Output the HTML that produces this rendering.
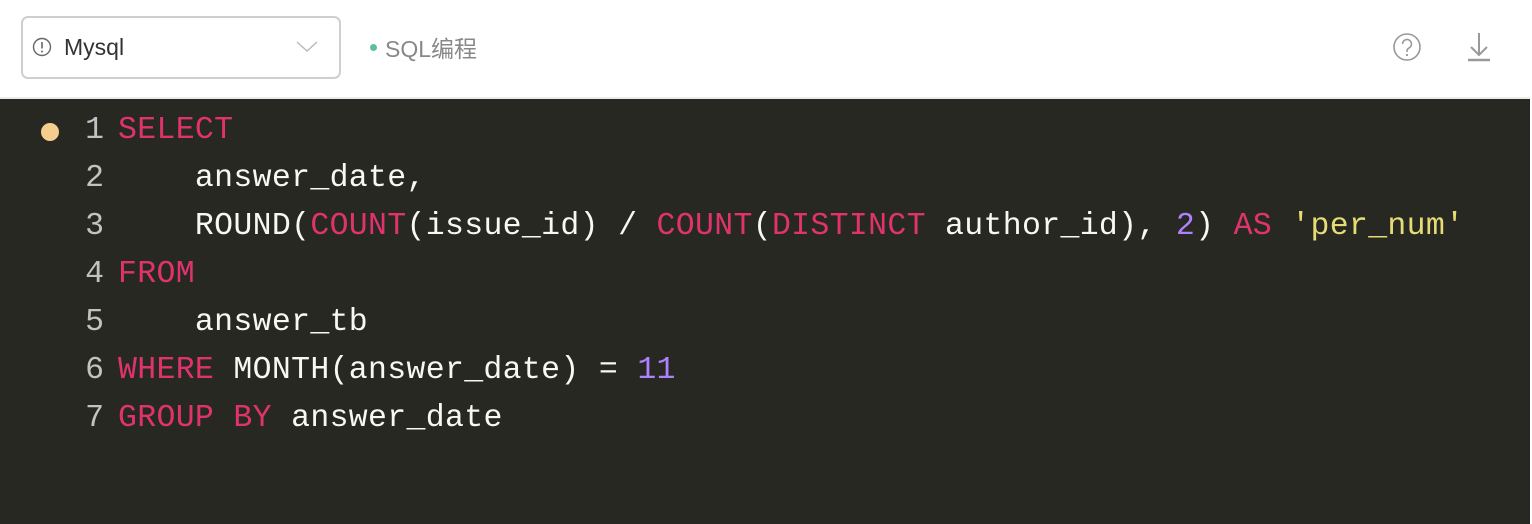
<!DOCTYPE html>
<html><head><meta charset="utf-8"><style>
body{margin:0;width:1532px;height:522px;background:#fff;overflow:hidden;position:relative;font-family:"Liberation Sans","Noto Sans CJK SC",sans-serif}
.sel{position:absolute;left:21px;top:16px;width:320px;height:63px;border:2px solid #cfcfcf;border-radius:7px;box-sizing:border-box}
.sel .t{position:absolute;left:41px;top:16px;font-size:23px;color:#333}
.tag{position:absolute;left:370px;top:30px;font-size:23px;color:#888}
.tag i{display:inline-block;width:7px;height:7px;border-radius:50%;background:#5bc0a0;margin-right:8px;vertical-align:middle;position:relative;top:-3px}
.ed{position:absolute;left:0;top:97px;width:1530px;height:425px;background:#272822;border-top:2px solid #ececec}
.code{position:absolute;left:0;top:8px;font-family:"Liberation Mono",monospace;font-size:31.5px;letter-spacing:0.33px;line-height:48px;color:#f8f8f2;white-space:pre}
.ln{display:inline-block;width:104px;text-align:right;color:#c2c2c2;margin-right:14px;letter-spacing:0}
.k{color:#e0336e}.n{color:#ae81ff}.s{color:#e6db74}
.dot{position:absolute;left:41px;top:24px;width:18px;height:18px;border-radius:50%;background:#f5cd8f}
</style></head><body>
<div class="sel">
<svg style="position:absolute;left:9px;top:19px" width="20" height="20" viewBox="0 0 20 20"><circle cx="10" cy="10" r="8.5" fill="none" stroke="#666" stroke-width="1.4"/><line x1="10" y1="5" x2="10" y2="11.5" stroke="#666" stroke-width="1.6"/><circle cx="10" cy="14.5" r="1" fill="#666"/></svg>
<span class="t">Mysql</span>
<svg style="position:absolute;left:273px;top:22px" width="22" height="14" viewBox="0 0 22 14"><polyline points="1,2 11,11 21,2" fill="none" stroke="#bbb" stroke-width="1.5"/></svg>
</div>
<div class="tag"><i></i>SQL编程</div>
<svg style="position:absolute;left:1392px;top:32px" width="30" height="30" viewBox="0 0 30 30"><circle cx="15" cy="15" r="13" fill="none" stroke="#999" stroke-width="1.6"/><path d="M10.5 12a4.5 4.5 0 1 1 6.5 4c-1.3.7-2 1.5-2 3v1" fill="none" stroke="#999" stroke-width="1.6"/><circle cx="15" cy="23" r="1.1" fill="#999"/></svg>
<svg style="position:absolute;left:1466px;top:31px" width="26" height="32" viewBox="0 0 26 32"><line x1="13" y1="2" x2="13" y2="24" stroke="#999" stroke-width="2"/><polyline points="5,16 13,24 21,16" fill="none" stroke="#999" stroke-width="2"/><line x1="2" y1="29" x2="24" y2="29" stroke="#999" stroke-width="2.5"/></svg>
<div class="ed">
<div class="dot"></div>
<div class="code"><span class="ln">1</span><span class="k">SELECT</span>
<span class="ln">2</span>    answer_date,
<span class="ln">3</span>    ROUND(<span class="k">COUNT</span>(issue_id) / <span class="k">COUNT</span>(<span class="k">DISTINCT</span> author_id), <span class="n">2</span>) <span class="k">AS</span> <span class="s">'per_num'</span>
<span class="ln">4</span><span class="k">FROM</span>
<span class="ln">5</span>    answer_tb
<span class="ln">6</span><span class="k">WHERE</span> MONTH(answer_date) = <span class="n">11</span>
<span class="ln">7</span><span class="k">GROUP BY</span> answer_date</div>
</div>
</body></html>
